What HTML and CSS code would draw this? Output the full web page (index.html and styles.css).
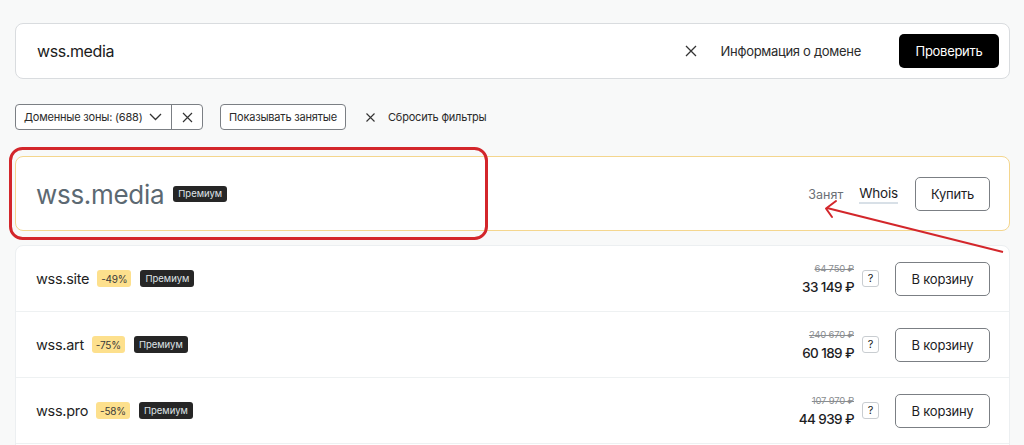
FILE: index.html
```html
<!DOCTYPE html>
<html lang="ru">
<head>
<meta charset="utf-8">
<title>Проверка домена</title>
<link rel="stylesheet" href="styles.css">
</head>
<body>
<div class="page">
  <div class="search">
    <div class="search-value">wss.media</div>
    <button class="icon-btn clear-btn" aria-label="Очистить">
      <svg width="12" height="12" viewBox="0 0 12 12"><path d="M1 1L11 11M11 1L1 11" stroke="#333" stroke-width="1.3" fill="none"/></svg>
    </button>
    <a class="info-link">Информация о домене</a>
    <button class="btn-dark">Проверить</button>
  </div>

  <div class="filters">
    <div class="chip-group">
      <div class="chip-main">Доменные зоны: (688)
        <svg class="chev" width="13" height="8" viewBox="0 0 13 8"><path d="M1 1L6.5 6.5L12 1" stroke="#333" stroke-width="1.3" fill="none"/></svg>
      </div>
      <div class="chip-x">
        <svg width="11" height="11" viewBox="0 0 11 11"><path d="M1 1L10 10M10 1L1 10" stroke="#333" stroke-width="1.2" fill="none"/></svg>
      </div>
    </div>
    <div class="chip">Показывать занятые</div>
    <div class="reset">
      <svg width="9" height="9" viewBox="0 0 9 9"><path d="M0.5 0.5L8.5 8.5M8.5 0.5L0.5 8.5" stroke="#333" stroke-width="1.1" fill="none"/></svg>
      <span>Сбросить фильтры</span>
    </div>
  </div>

  <div class="main-card">
    <div class="main-left">
      <span class="main-name">wss.media</span>
      <span class="badge-premium">Премиум</span>
    </div>
    <div class="main-right">
      <span class="status">Занят</span>
      <a class="whois">Whois</a>
      <button class="btn-outline btn-buy">Купить</button>
    </div>
  </div>

  <div class="list">
    <div class="row">
      <div class="row-left">
        <span class="name">wss.site</span>
        <span class="badge-sale">-49%</span>
        <span class="badge-premium">Премиум</span>
      </div>
      <div class="row-right">
        <div class="price">
          <span class="old">64 750 ₽</span>
          <span class="new">33 149 ₽</span>
        </div>
        <span class="help">?</span>
        <button class="btn-outline btn-cart">В корзину</button>
      </div>
    </div>
    <div class="row">
      <div class="row-left">
        <span class="name">wss.art</span>
        <span class="badge-sale">-75%</span>
        <span class="badge-premium">Премиум</span>
      </div>
      <div class="row-right">
        <div class="price">
          <span class="old">240 670 ₽</span>
          <span class="new">60 189 ₽</span>
        </div>
        <span class="help">?</span>
        <button class="btn-outline btn-cart">В корзину</button>
      </div>
    </div>
    <div class="row">
      <div class="row-left">
        <span class="name">wss.pro</span>
        <span class="badge-sale">-58%</span>
        <span class="badge-premium">Премиум</span>
      </div>
      <div class="row-right">
        <div class="price">
          <span class="old">107 970 ₽</span>
          <span class="new">44 939 ₽</span>
        </div>
        <span class="help">?</span>
        <button class="btn-outline btn-cart">В корзину</button>
      </div>
    </div>
    <div class="row row-empty"></div>
  </div>
</div>

<svg class="annotation" width="1024" height="445" viewBox="0 0 1024 445">
  <rect x="10.5" y="148.5" width="476" height="90" rx="12" ry="12" fill="none" stroke="#d3262b" stroke-width="3"/>
  <path d="M1003 252L827 208" stroke="#d3262b" stroke-width="2" fill="none"/>
  <path d="M836 201L826 208.5L832 217" stroke="#d3262b" stroke-width="2" fill="none" stroke-linecap="round" stroke-linejoin="round"/>
</svg>
</body>
</html>
```

FILE: styles.css
```css
* { box-sizing: border-box; }

html, body {
  margin: 0;
  padding: 0;
  background: #f8f9f9;
  font-family: Inter, "Noto Sans", "Liberation Sans", sans-serif;
  color: #1d1d1f;
  overflow: hidden;
}

button {
  font-family: inherit;
  cursor: pointer;
}

.page {
  padding: 23px 14px 0 15px;
}

/* Search */
.search {
  height: 56px;
  background: #fff;
  border: 1px solid #d9dcdf;
  border-radius: 8px;
  display: flex;
  align-items: center;
  padding: 0 10px 0 21px;
}

.search-value {
  flex: 1;
  font-size: 16px;
  letter-spacing: -0.4px;
  color: #1b1b1b;
}

.icon-btn {
  background: none;
  border: 0;
  padding: 0;
  display: flex;
  align-items: center;
}

.clear-btn {
  margin-right: 24px;
}

.info-link {
  font-size: 13px;
  letter-spacing: -0.3px;
  color: #2b2b2b;
  margin-right: 38px;
  white-space: nowrap;
}

.btn-dark {
  width: 100px;
  height: 34px;
  background: #000;
  color: #fff;
  border: 0;
  border-radius: 5px;
  font-size: 13px;
  letter-spacing: -0.3px;
}

/* Filters */
.filters {
  margin-top: 25px;
  height: 26px;
  display: flex;
  align-items: center;
  white-space: nowrap;
  font-size: 11px;
  letter-spacing: -0.2px;
  color: #2b2b2b;
}

.chip-group {
  display: flex;
  height: 26px;
  border: 1px solid #7b7f84;
  border-radius: 4px;
  background: #fff;
}

.chip-main {
  display: flex;
  align-items: center;
  padding: 0 9px 0 8px;
  border-right: 1px solid #7b7f84;
  width: 156px;
}

.chev {
  margin-left: auto;
}

.chip-x {
  width: 30px;
  display: flex;
  align-items: center;
  justify-content: center;
}

.chip {
  margin-left: 17px;
  height: 26px;
  width: 126px;
  justify-content: center;
  display: flex;
  align-items: center;
  border: 1px solid #7b7f84;
  border-radius: 4px;
  background: #fff;
}

.reset {
  margin-left: 20px;
  display: flex;
  align-items: center;
  gap: 13px;
}

/* Main card */
.main-card {
  margin-top: 26px;
  height: 75px;
  background: #fff;
  border: 1px solid #f4d68e;
  border-radius: 8px;
  display: flex;
  align-items: center;
  justify-content: space-between;
  padding: 0 19px 0 20px;
}

.main-left {
  display: flex;
  align-items: center;
}

.main-name {
  font-size: 26px;
  color: #5c6972;
  letter-spacing: -0.3px;
  margin-top: 1px;
}

.main-left .badge-premium {
  margin-left: 9px;
}

.badge-premium {
  display: inline-flex;
  align-items: center;
  height: 16px;
  padding: 0 5px;
  background: #262626;
  color: #dfe3e6;
  font-size: 9.5px;
  border-radius: 3px;
}

.main-right {
  display: flex;
  align-items: center;
}

.status {
  font-size: 12.5px;
  color: #6b7076;
  margin-right: 16px;
  margin-top: 2px;
}

.whois {
  font-size: 13.5px;
  letter-spacing: -0.2px;
  color: #1d1d1f;
  border-bottom: 2px solid #d8e0e7;
  padding-bottom: 1px;
  margin-right: 17px;
  margin-top: 2px;
}

.btn-outline {
  background: #fff;
  border: 1px solid #7b7f84;
  border-radius: 5px;
  color: #1d1d1f;
  font-size: 13px;
  letter-spacing: -0.2px;
  height: 34px;
}

.btn-buy {
  width: 75px;
}

/* List */
.list {
  margin-top: 14px;
  background: #fff;
  border: 1px solid #eceff1;
  border-radius: 8px;
}

.row {
  height: 66px;
  display: flex;
  align-items: center;
  justify-content: space-between;
  padding: 0 19px 0 20px;
  border-bottom: 1px solid #eef1f2;
}

.row-left {
  display: flex;
  align-items: center;
}

.name {
  font-size: 14.5px;
  letter-spacing: -0.3px;
  color: #1f1f1f;
}

.badge-sale {
  margin-left: 8px;
  display: inline-flex;
  align-items: center;
  height: 17px;
  padding: 0 4px;
  background: #fde08d;
  color: #3a3a3a;
  font-size: 10px;
  letter-spacing: -0.2px;
  border-radius: 3px;
}

.row-left .badge-premium {
  margin-left: 9px;
  height: 17px;
}

.row-right {
  display: flex;
  align-items: center;
}

.price {
  display: flex;
  flex-direction: column;
  align-items: flex-end;
  margin-top: 2px;
}

.old {
  font-size: 9.5px;
  letter-spacing: -0.2px;
  color: #8a8d90;
  text-decoration: line-through;
  line-height: 12px;
}

.new {
  font-size: 13.5px;
  font-weight: 500;
  letter-spacing: -0.6px;
  color: #1d1d1f;
  line-height: 20px;
  margin-top: 2px;
}

.help {
  margin-left: 8px;
  width: 17px;
  height: 17px;
  border: 1px solid #c9cdd1;
  border-radius: 3px;
  display: flex;
  align-items: center;
  justify-content: center;
  font-size: 11px;
  color: #222;
  margin-bottom: 1px;
}

.btn-cart {
  margin-left: 16px;
  width: 95px;
}

/* Annotation overlay */
.annotation {
  position: absolute;
  left: 0;
  top: 0;
  pointer-events: none;
}
```
